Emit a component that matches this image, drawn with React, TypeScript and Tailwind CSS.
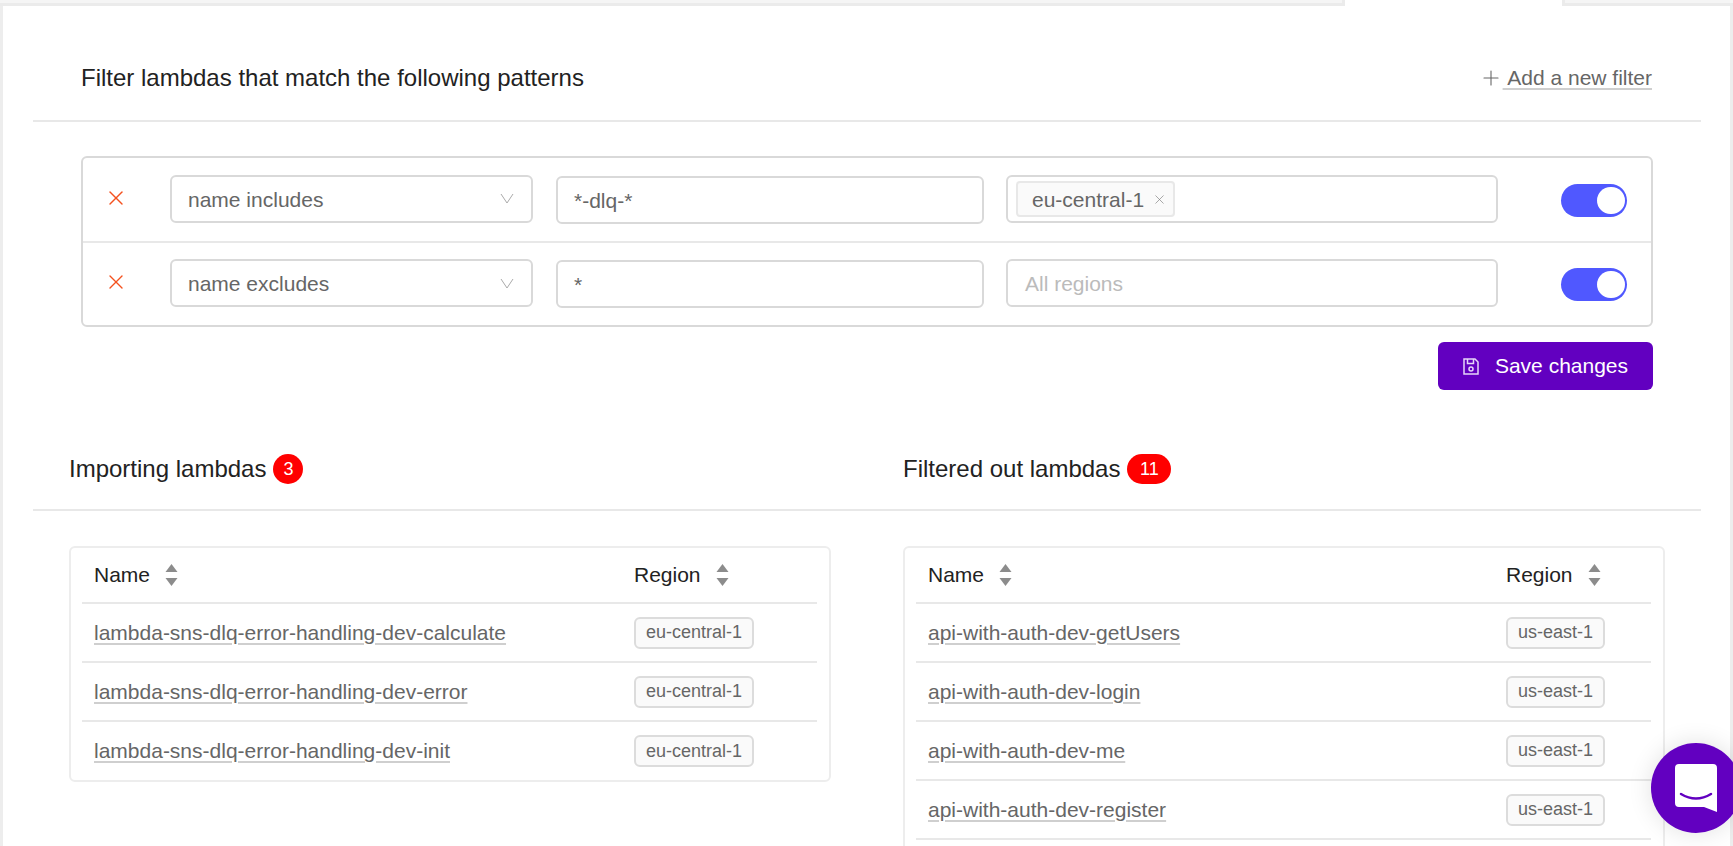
import { Plus, X } from "lucide-react";

const importing = [
  "lambda-sns-dlq-error-handling-dev-calculate",
  "lambda-sns-dlq-error-handling-dev-error",
  "lambda-sns-dlq-error-handling-dev-init",
];

const filtered = [
  "api-with-auth-dev-getUsers",
  "api-with-auth-dev-login",
  "api-with-auth-dev-me",
  "api-with-auth-dev-register",
];

function SortIcon() {
  return (
    <svg width="13" height="22" viewBox="0 0 13 22" className="ml-[15px] shrink-0">
      <path d="M6.5 0 L12.5 8 H0.5 Z" fill="#8c8c8c" />
      <path d="M6.5 22 L12.5 14 H0.5 Z" fill="#8c8c8c" />
    </svg>
  );
}

function SaveIcon() {
  return (
    <svg width="16" height="17" viewBox="0 0 16 17" fill="none" stroke="#e6d5f7" strokeWidth="1.5" className="shrink-0">
      <path d="M1 1 H12 L15 4 V16 H1 Z" />
      <path d="M4.5 1 V5.5 H10.5 V1" />
      <circle cx="8" cy="11" r="2" />
    </svg>
  );
}

function Toggle({ tall }: { tall?: boolean }) {
  return (
    <div className={tall ? "ml-[63px] mt-[4px] flex h-[33px] w-[66px] shrink-0 items-center justify-end rounded-full bg-[#5058ff] pr-[2px]" : "ml-[63px] mt-[2px] flex h-[33px] w-[66px] shrink-0 items-center justify-end rounded-full bg-[#5058ff] pr-[2px]"}>
      <div className="h-[27px] w-[28px] rounded-full bg-white" />
    </div>
  );
}

function Dropdown({ label }: { label: string }) {
  return (
    <div className="flex h-[48px] w-[363px] shrink-0 items-center justify-between rounded-md border-2 border-[#d9d9d9] pl-[16px] pr-[17px] text-[#666]">
      <span className="pt-[2px]">{label}</span>
      <svg width="14" height="11" viewBox="0 0 14 11" fill="none" stroke="#aaa" strokeWidth="1">
        <path d="M1 1 L7 10 L13 1" />
      </svg>
    </div>
  );
}

function FilterRow({ label, pattern, tall, children }: { label: string; pattern: string; tall?: boolean; children: React.ReactNode }) {
  return (
    <div className={tall ? "flex h-[83px] items-center pb-[2px]" : "flex h-[82px] items-center pb-[2px]"}>
      <div className="w-[87px] shrink-0 pb-[2px] pl-[21px]">
        <X size={24} strokeWidth={1.4} className="text-[#f4511e]" />
      </div>
      <Dropdown label={label} />
      <div className="ml-[23px] mt-[2px] flex h-[48px] w-[428px] shrink-0 items-center rounded-md border-2 border-[#d9d9d9] pl-[16px] pt-[2px] text-[#666]">
        {pattern}
      </div>
      <div className="ml-[22px] flex h-[48px] w-[492px] shrink-0 items-center rounded-md border-2 border-[#d9d9d9] pl-[8px] text-[#666]">
        {children}
      </div>
      <Toggle tall={tall} />
    </div>
  );
}

function Badge({ count, wide }: { count: string; wide?: boolean }) {
  return (
    <span className={wide ? "ml-[7px] flex h-[30px] w-[44px] items-center justify-center rounded-full bg-[#ff0000] text-[18px] text-white" : "ml-[7px] flex h-[30px] w-[30px] items-center justify-center rounded-full bg-[#ff0000] text-[18px] text-white"}>
      {count}
    </span>
  );
}

function LambdaTable({ rows, region, first, badge, clipped }: { rows: string[]; region: string; first: string; badge: string; clipped?: boolean }) {
  return (
    <div className={clipped ? "h-[320px] rounded-md border-2 border-[#ededed] pl-[11px] pr-[12px]" : "rounded-md border-2 border-[#ededed] pl-[11px] pr-[12px]"}>
      <div className="flex h-[56px] items-center border-b-2 border-[#e8e8e8] text-[#222]">
        <div className={first + " flex items-center pl-[12px]"}>
          Name
          <SortIcon />
        </div>
        <div className="flex items-center">
          Region
          <SortIcon />
        </div>
      </div>
      {rows.map((name, i) => (
        <div
          key={name}
          className={i === rows.length - 1 && !clipped ? "flex h-[58px] items-center" : "flex h-[59px] items-center border-b-2 border-[#e8e8e8]"}
        >
          <div className={first + " pl-[12px]"}>
            <a className="text-[#666] underline decoration-[#cfcfcf] decoration-2 underline-offset-[3px]">{name}</a>
          </div>
          <span className={badge + " flex h-[32px] items-center justify-center rounded-md border-2 border-[#dcdcdc] bg-[#fafafa] text-[18px] text-[#666]"}>
            {region}
          </span>
        </div>
      ))}
    </div>
  );
}

export default function App() {
  return (
    <div className="relative h-[846px] overflow-hidden bg-white font-['Liberation_Sans',Arial,sans-serif] text-[21px]">
      <div className="flex h-[6px]">
        <div className="h-full w-[1345px] border-b-[3px] border-r-[3px] border-[#ebebeb] bg-[#f5f5f5]" />
        <div className="h-full w-[217px]" />
        <div className="h-full flex-1 border-b-[3px] border-l-[3px] border-[#ebebeb] bg-[#f5f5f5]" />
      </div>

      <div className="h-[840px] border-x-[3px] border-[#ededed] pl-[30px] pr-[29px]">
        <div className="flex h-[116px] items-center justify-between border-b-2 border-[#e8e8e8] pl-[48px] pr-[49px] pt-[30px]">
          <h1 className="text-[24px] text-[#222]">Filter lambdas that match the following patterns</h1>
          <a className="flex items-center text-[#666]">
            <Plus size={24} strokeWidth={1.1} />
            <span className="whitespace-pre underline decoration-[#cfcfcf] decoration-2 underline-offset-[3px]"> Add a new filter</span>
          </a>
        </div>

        <div className="mx-[48px] mt-[34px] rounded-md border-2 border-[#d9d9d9]">
          <FilterRow label="name includes" pattern="*-dlq-*" tall>
            <span className="flex h-[36px] w-[159px] items-center justify-between rounded-sm border-2 border-[#e8e8e8] bg-[#fafafa] pl-[14px] pr-[6px] pt-[2px]">
              eu-central-1
              <X size={15} strokeWidth={1} className="text-[#777]" />
            </span>
          </FilterRow>
          <div className="h-[2px] bg-[#e8e8e8]" />
          <FilterRow label="name excludes" pattern="*">
            <span className="pl-[9px] pt-[2px] text-[#bbb]">All regions</span>
          </FilterRow>
        </div>

        <div className="mr-[48px] mt-[15px] flex justify-end">
          <button className="flex h-[48px] w-[215px] items-center justify-center gap-[16px] rounded-md bg-[#6200c0] text-white">
            <SaveIcon />
            Save changes
          </button>
        </div>

        <div className="flex h-[121px] items-center border-b-2 border-[#e8e8e8] pl-[36px] pt-[39px] text-[24px] text-[#222]">
          <div className="flex w-[834px] items-center">
            Importing lambdas
            <Badge count="3" />
          </div>
          <div className="flex items-center">
            Filtered out lambdas
            <Badge count="11" wide />
          </div>
        </div>

        <div className="ml-[36px] mt-[35px] flex items-start gap-[72px]">
          <div className="w-[762px]">
            <LambdaTable rows={importing} region="eu-central-1" first="w-[552px]" badge="w-[120px]" />
          </div>
          <div className="w-[762px]">
            <LambdaTable rows={filtered} region="us-east-1" first="w-[590px]" badge="w-[99px]" clipped />
          </div>
        </div>
      </div>

      <div className="absolute left-[1651px] top-[743px] flex h-[90px] w-[90px] items-center justify-center rounded-full bg-[#6200c0] shadow-[0_0_24px_rgba(0,0,0,0.12)]">
        <svg width="42" height="48" viewBox="0 0 42 48">
          <path d="M4 0 H38 Q42 0 42 4 V48 L29 43 H4 Q0 43 0 39 V4 Q0 0 4 0 Z" fill="#fff" />
          <path d="M6 30 Q21 39 36 30" fill="none" stroke="#6200c0" strokeWidth="2.5" strokeLinecap="round" />
        </svg>
      </div>
    </div>
  );
}
